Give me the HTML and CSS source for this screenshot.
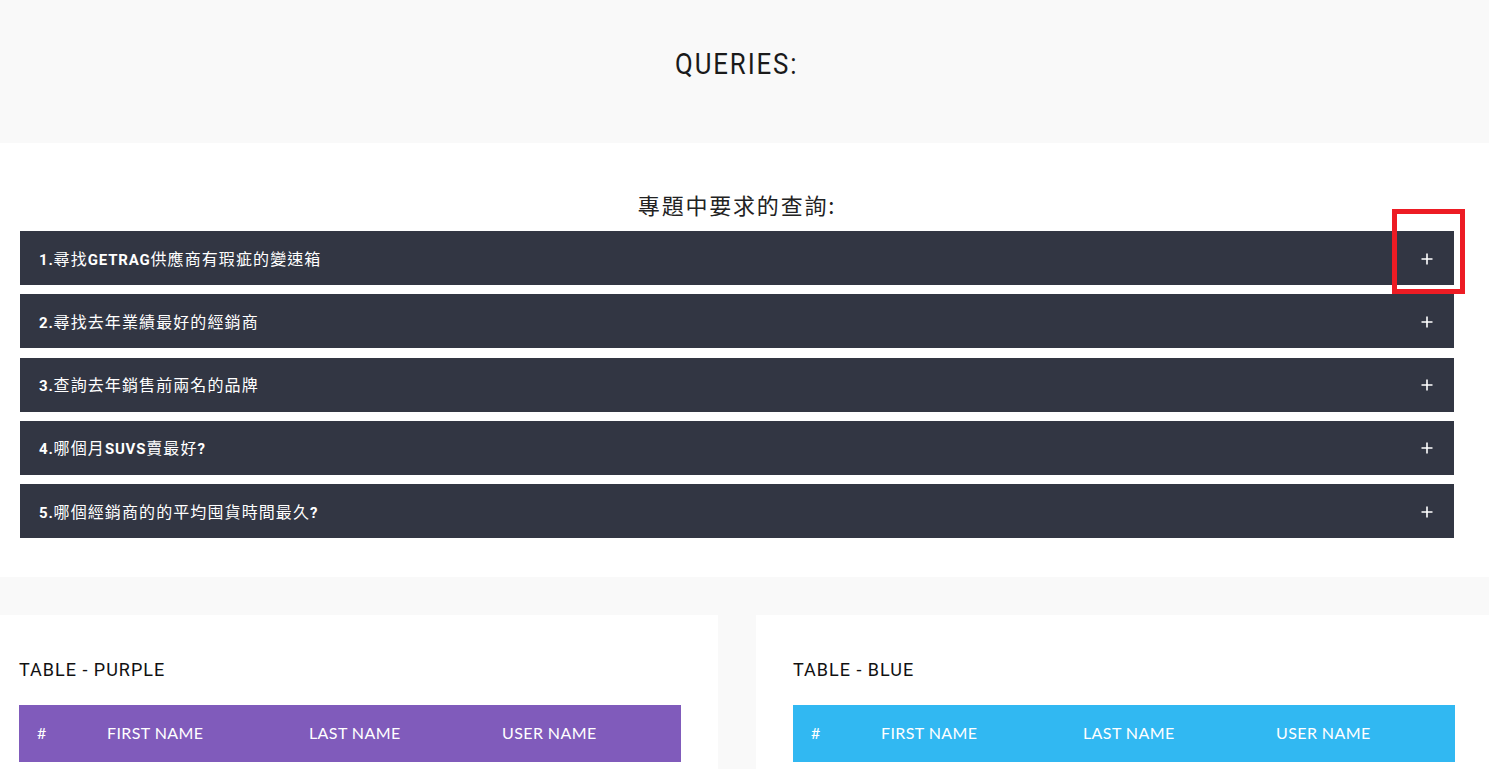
FILE: index.html
```html
<!DOCTYPE html>
<html lang="zh-Hant">
<head>
<meta charset="utf-8">
<title>Queries</title>
<link rel="stylesheet" href="styles.css">
</head>
<body>
<section class="hero">
  <h1 class="hero-title"><span class="narrow">QUERIES:</span></h1>
</section>

<section class="queries">
  <h2 class="queries-title">專題中要求的查詢:</h2>
  <div class="accordion">
    <div class="acc-item"><span class="acc-text"><span class="lat">1.</span>尋找<span class="lat">GETRAG</span>供應商有瑕疵的變速箱</span><svg class="acc-plus" width="12" height="12" viewBox="0 0 12 12"><path d="M6 0.5V11.5M0.5 6H11.5" stroke="#fff" stroke-width="1.6" fill="none"/></svg></div>
    <div class="acc-item"><span class="acc-text"><span class="lat">2.</span>尋找去年業績最好的經銷商</span><svg class="acc-plus" width="12" height="12" viewBox="0 0 12 12"><path d="M6 0.5V11.5M0.5 6H11.5" stroke="#fff" stroke-width="1.6" fill="none"/></svg></div>
    <div class="acc-item"><span class="acc-text"><span class="lat">3.</span>查詢去年銷售前兩名的品牌</span><svg class="acc-plus" width="12" height="12" viewBox="0 0 12 12"><path d="M6 0.5V11.5M0.5 6H11.5" stroke="#fff" stroke-width="1.6" fill="none"/></svg></div>
    <div class="acc-item"><span class="acc-text"><span class="lat">4.</span>哪個月<span class="lat">SUVS</span>賣最好<span class="lat">?</span></span><svg class="acc-plus" width="12" height="12" viewBox="0 0 12 12"><path d="M6 0.5V11.5M0.5 6H11.5" stroke="#fff" stroke-width="1.6" fill="none"/></svg></div>
    <div class="acc-item"><span class="acc-text"><span class="lat">5.</span>哪個經銷商的的平均囤貨時間最久<span class="lat">?</span></span><svg class="acc-plus" width="12" height="12" viewBox="0 0 12 12"><path d="M6 0.5V11.5M0.5 6H11.5" stroke="#fff" stroke-width="1.6" fill="none"/></svg></div>
  </div>
  <div class="annot-box"></div>
</section>

<section class="tables">
  <div class="card card-left">
    <h3 class="card-title">TABLE - PURPLE</h3>
    <table class="tbl tbl-purple">
      <thead>
        <tr><th class="c1">#</th><th class="c2">FIRST NAME</th><th class="c3">LAST NAME</th><th class="c4">USER NAME</th></tr>
      </thead>
    </table>
  </div>
  <div class="card card-right">
    <h3 class="card-title">TABLE - BLUE</h3>
    <table class="tbl tbl-blue">
      <thead>
        <tr><th class="c1">#</th><th class="c2">FIRST NAME</th><th class="c3">LAST NAME</th><th class="c4">USER NAME</th></tr>
      </thead>
    </table>
  </div>
</section>
</body>
</html>
```

FILE: styles.css
```css
* { box-sizing: border-box; }
html, body { margin: 0; padding: 0; }
body {
  background: #f9f9f9;
  font-family: Roboto, "Noto Sans CJK TC", sans-serif;
  color: #111;
  overflow: hidden;
  height: 769px;
}

.hero {
  height: 143px;
  background: #f9f9f9;
  padding: 45px 15px 0 0;
}
.hero-title {
  margin: 0;
  text-align: center;
  font-family: Roboto, sans-serif;
  font-weight: 400;
  font-size: 30px;
  line-height: 38px;
  color: #1a1a1a;
}
.narrow {
  display: inline-block;
  letter-spacing: 2.2px;
  transform: scaleX(0.86);
}

.queries {
  position: relative;
  background: #fff;
  height: 434px;
  padding: 47px 35px 0 20px;
}
.queries-title {
  margin: 0 0 11px 0;
  height: 30px;
  text-align: center;
  font-family: "Noto Sans CJK TC", sans-serif;
  font-weight: 400;
  font-size: 22px;
  line-height: 28px;
  letter-spacing: 1.8px;
  color: #222;
}
.accordion {
  display: flex;
  flex-direction: column;
  gap: 9.25px;
}
.acc-item {
  height: 54px;
  background: #323643;
  display: flex;
  align-items: center;
  justify-content: space-between;
  padding: 1px 21px 0 19px;
  color: #fff;
}
.acc-text {
  font-family: "Noto Sans CJK TC", sans-serif;
  font-size: 16px;
  font-weight: 400;
  letter-spacing: 1.1px;
  line-height: 20px;
}
.acc-text .lat {
  font-family: Roboto, sans-serif;
  font-weight: 700;
  font-size: 15px;
  letter-spacing: 0.8px;
}
.acc-plus { display: block; }

.annot-box {
  position: absolute;
  left: 1392px;
  top: 66px;
  width: 73px;
  height: 85px;
  border: 5px solid #ed1c24;
}

.tables {
  margin-top: 38px;
  display: grid;
  grid-template-columns: 718px 733px;
  column-gap: 38px;
}
.card {
  background: #fff;
  height: 154px;
  padding-top: 43px;
}
.card-left { padding-left: 19px; }
.card-right { padding-left: 37px; }
.card-title {
  margin: 0 0 23px 0;
  font-family: Roboto, sans-serif;
  font-weight: 400;
  font-size: 18px;
  line-height: 24px;
  letter-spacing: 1px;
  color: #111;
}
.tbl {
  width: 662px;
  border-collapse: collapse;
  font-family: Lato, sans-serif;
}
.tbl th {
  height: 57px;
  padding: 0 0 2px 0;
  text-align: left;
  color: #fff;
  font-weight: 400;
  font-size: 16px;
  letter-spacing: 0.4px;
}
.tbl-purple thead tr { background: #805bbb; }
.tbl-blue thead tr { background: #31b8f2; }
.tbl .c1 { width: 88px; padding-left: 18px; }
.tbl .c2 { width: 202px; }
.tbl .c3 { width: 193px; }
```
